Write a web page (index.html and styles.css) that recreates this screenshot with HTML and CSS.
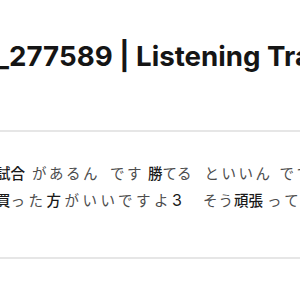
FILE: index.html
```html
<!DOCTYPE html>
<html>
	<head>
		<meta charset="UTF-8">
		<title>Listening Training</title>
		<link rel="stylesheet" href="styles.css">
	</head>
	<body>
		<div class="page">
			<h1 class="title">Audio_277589 | Listening Training</h1>
			<div class="script">
				<p class="line"><span class="kj">試合</span><span class="kn gap">があるん</span><span class="kn gap-l">です</span><span class="kj gap-s">勝</span><span class="okuri">てる</span><span class="kn gap-xl">といいん</span><span class="kn gap">です</span><span class="kn gap">よね</span></p>
				<p class="line line-b"><span class="kj">買</span><span class="kn">った</span><span class="kj sp">方</span><span class="kn">がいいですよ</span><span class="kj num">3</span><span class="kn tight gap-xxl">そう</span><span class="kj">頑張</span><span class="kn gap-s">って</span><span class="kn">ください</span></p>
			</div>
		</div>
	</body>
</html>
```

FILE: styles.css
```css
body{
	margin: 0;
	background: #fff;
	overflow: hidden;
}
.page{
	margin-left: -84px;
	width: 700px;
}
.title{
	margin: 0;
	padding: 39px 0 57px 0;
	font-family: Inter, "Liberation Sans", sans-serif;
	font-size: 27.7px;
	font-weight: 700;
	color: #151515;
	white-space: nowrap;
	border-bottom: 2px solid #e6e6e6;
}
.script{
	padding: 27px 0 43px 80px;
	border-bottom: 2px solid #e6e6e6;
}
.line{
	margin: 0;
	font-family: "Noto Sans CJK JP", "Noto Sans", sans-serif;
	font-size: 14.5px;
	line-height: 27px;
	white-space: nowrap;
}
.kj{
	color: #1a1a1a;
	font-weight: 500;
}
.num{
	font-family: Inter, "Noto Sans", sans-serif;
	font-size: 16px;
	font-weight: 400;
}
.kn,.okuri{
	color: #4d4d4d;
}
.kn{
	letter-spacing: 2.5px;
}
.line-b .kn,.line-b .sp{
	letter-spacing: 3.5px;
}
.line-b .tight{
	letter-spacing: 1px;
}
.gap-s{margin-left: 4px;}
.gap{margin-left: 7px;}
.gap-l{margin-left: 10px;}
.gap-xl{margin-left: 13px;}
.gap-xxl{margin-left: 21px;}
```
